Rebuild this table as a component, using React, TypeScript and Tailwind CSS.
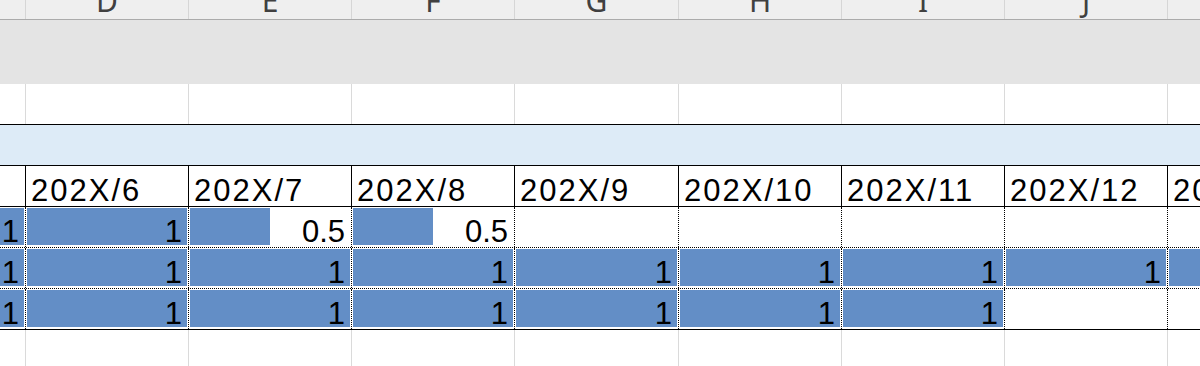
import React from "react";

// Sheet columns C..K; the sheet is scrolled so column C is mostly off to the left.
const LETTERS = ["C", "D", "E", "F", "G", "H", "I", "J", "K"];
const MONTHS = [
  "202X/5",
  "202X/6",
  "202X/7",
  "202X/8",
  "202X/9",
  "202X/10",
  "202X/11",
  "202X/12",
  "202Y/1",
];
const WIDTHS = [
  "w-[163px]",
  "w-[163px]",
  "w-[163px]",
  "w-[163px]",
  "w-[164px]",
  "w-[163px]",
  "w-[163px]",
  "w-[163px]",
  "w-[163px]",
];

type Val = number | null;
const ROWS: Val[][] = [
  [1, 1, 0.5, 0.5, null, null, null, null, null],
  [1, 1, 1, 1, 1, 1, 1, 1, 1],
  [1, 1, 1, 1, 1, 1, 1, null, null],
];

const cellFont = "font-['Liberation_Sans','Noto_Sans_CJK_JP',sans-serif] text-black";

function LetterRow() {
  return (
    <div className="flex h-[20px] border-b border-[#ababab] bg-[#efefef]">
      {LETTERS.map((l, i) => (
        <div
          key={l}
          className={`${WIDTHS[i]} shrink-0 overflow-hidden border-r border-[#d6d6d6] flex items-end justify-center pb-[3px]`}
        >
          <span className="font-['Noto_Sans',sans-serif] text-[30px] leading-[30px] text-[#404040]">
            {l}
          </span>
        </div>
      ))}
    </div>
  );
}

function PlainRow({ className }: { className: string }) {
  return (
    <div className={`flex ${className}`}>
      {WIDTHS.map((w, i) => (
        <div key={i} className={`${w} shrink-0 border-r border-[#dadada]`} />
      ))}
    </div>
  );
}

function MonthRow() {
  return (
    <div className="flex h-[41px] border-b border-black bg-white">
      {MONTHS.map((m, i) => (
        <div
          key={m}
          className={`${WIDTHS[i]} shrink-0 border-r border-black flex items-end pl-[5px] whitespace-nowrap overflow-hidden`}
        >
          <span className={`${cellFont} text-[31px] leading-[31px] tracking-[2px]`}>{m}</span>
        </div>
      ))}
    </div>
  );
}

function DataCell({ v, w }: { v: Val; w: string }) {
  return (
    <div
      className={`${w} shrink-0 relative border-r border-dotted border-black flex items-end justify-end pr-[6px]`}
    >
      {v !== null && (
        <>
          <div className="absolute top-[1px] bottom-[2px] left-[1px] right-[1px]">
            <div className="h-full bg-[#638ec6]" style={{ width: `${v * 100}%` }} />
          </div>
          <span className={`relative ${cellFont} text-[31px] leading-[31px]`}>{v}</span>
        </>
      )}
    </div>
  );
}

function DataRow({ vals, solid }: { vals: Val[]; solid: boolean }) {
  return (
    <div
      className={`flex h-[41px] border-b border-black bg-white ${
        solid ? "border-solid" : "border-dotted"
      }`}
    >
      {vals.map((v, i) => (
        <DataCell key={i} v={v} w={WIDTHS[i]} />
      ))}
    </div>
  );
}

export default function App() {
  return (
    <div className="w-[1200px] h-[366px] overflow-hidden bg-white">
      <div className="-ml-[137px] w-[1480px] flex flex-col h-full">
        <LetterRow />
        <div className="h-[64px] bg-[#e4e4e4]" />
        <PlainRow className="h-[41px] border-b border-black" />
        <div className="h-[41px] border-b border-black bg-[#ddebf7]" />
        <MonthRow />
        {ROWS.map((r, i) => (
          <DataRow key={i} vals={r} solid={i === ROWS.length - 1} />
        ))}
        <PlainRow className="flex-1" />
      </div>
    </div>
  );
}
